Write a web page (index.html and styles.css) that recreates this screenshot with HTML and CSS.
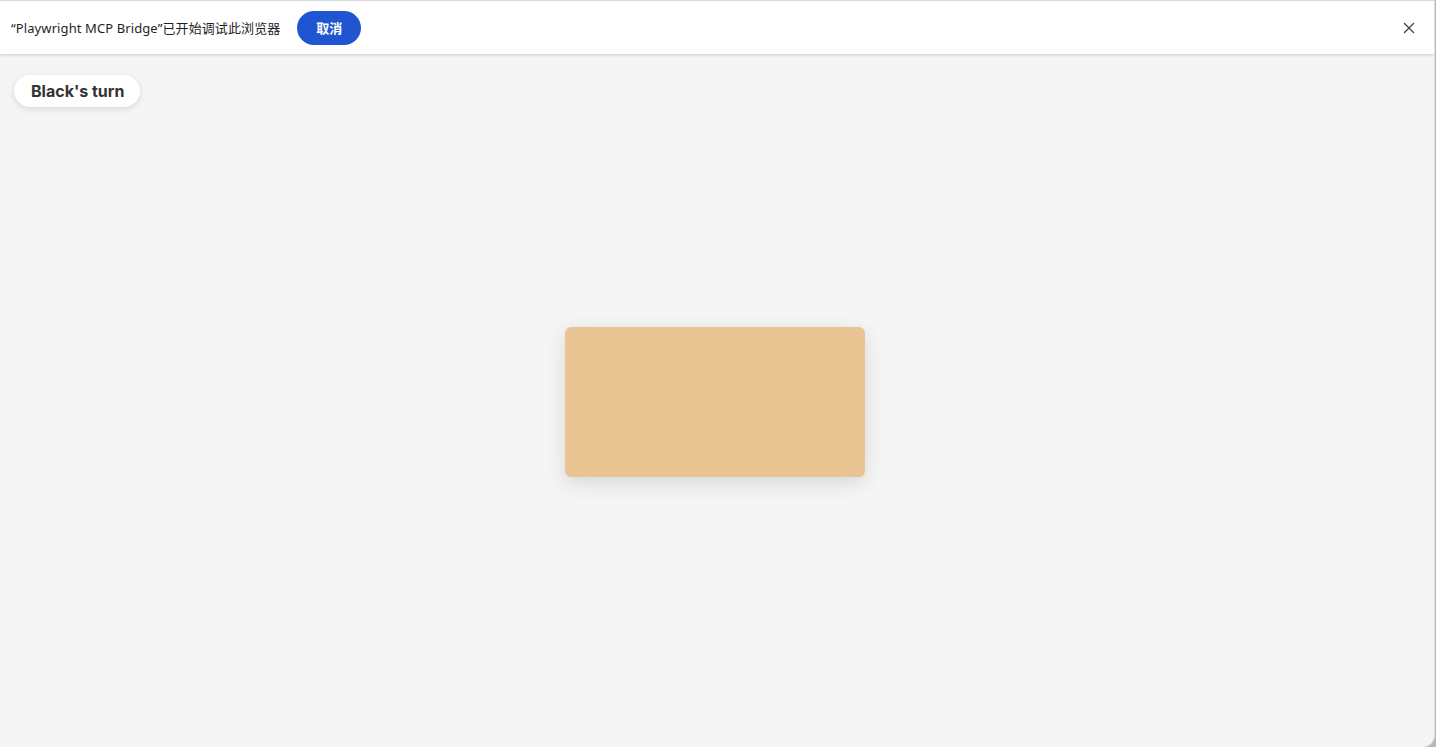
FILE: index.html
```html
<!DOCTYPE html>
<html lang="en">
<head>
    <meta charset="UTF-8">
    <meta name="viewport" content="width=device-width, initial-scale=1.0">
    <title>Go</title>
    <link rel="stylesheet" href="styles.css">
</head>
<body>
    <div class="window">
        <div class="infobar">
            <span class="infobar-text">“Playwright MCP Bridge”已开始调试此浏览器</span>
            <button class="btn-cancel">取消</button>
            <span class="spacer"></span>
            <svg class="close" viewBox="0 0 12 12" width="12" height="12">
                <path d="M1.5 1.5 L10.5 10.5 M10.5 1.5 L1.5 10.5" stroke="#444" stroke-width="1.4" stroke-linecap="round"/>
            </svg>
        </div>
        <div class="page">
            <div class="turn-row">
                <div class="turn">Black's turn</div>
            </div>
            <div class="board-wrap">
                <div class="board"></div>
            </div>
        </div>
    </div>
</body>
</html>
```

FILE: styles.css
```css
html, body {
    width: 100%;
    height: 100%;
    margin: 0;
    padding: 0;
    background: #b9b9b9;
    font-family: Inter, 'Noto Sans CJK SC', sans-serif;
    overflow: hidden;
}
.window {
    height: 747px;
    width: 1434px;
    background: #f5f5f5;
    border-right: 1px solid #dcdcdc;
    border-bottom-right-radius: 12px;
    display: flex;
    flex-direction: column;
    overflow: hidden;
}
.infobar {
    height: 53px;
    flex: 0 0 auto;
    background: #fff;
    border-top: 1px solid #dadada;
    box-shadow: 0 1px 3px rgba(0,0,0,0.18);
    display: flex;
    align-items: center;
    padding: 0 19px 0 11px;
    position: relative;
    z-index: 1;
}
.infobar-text {
    font-family: 'Noto Sans', 'Noto Sans CJK SC', sans-serif;
    font-size: 13px;
    color: #1f1f1f;
    letter-spacing: 0.1px;
}
.btn-cancel {
    margin-left: 17px;
    height: 34px;
    width: 64px;
    border: none;
    border-radius: 17px;
    background: #1f55d0;
    color: #fff;
    font-family: 'Noto Sans CJK SC', sans-serif;
    font-weight: 700;
    font-size: 13px;
    padding: 0;
}
.spacer {
    flex: 1;
}
.close {
    display: block;
}
.page {
    flex: 1;
    display: flex;
    flex-direction: column;
}
.turn-row {
    padding: 21px 0 0 14px;
    display: flex;
}
.turn {
    background: #fff;
    border-radius: 16px;
    height: 32px;
    line-height: 32px;
    padding: 0 16px 0 17px;
    font-weight: 700;
    font-size: 16px;
    color: #333;
    box-shadow: 0 2px 6px rgba(0,0,0,0.12);
}
.board-wrap {
    display: flex;
    justify-content: center;
    padding: 220px 0 0 0;
}
.board {
    width: 300px;
    height: 150px;
    background: #e8c592;
    border-radius: 6px;
    box-shadow: 0 6px 20px rgba(0,0,0,0.12);
    margin-right: 4px;
}
```
